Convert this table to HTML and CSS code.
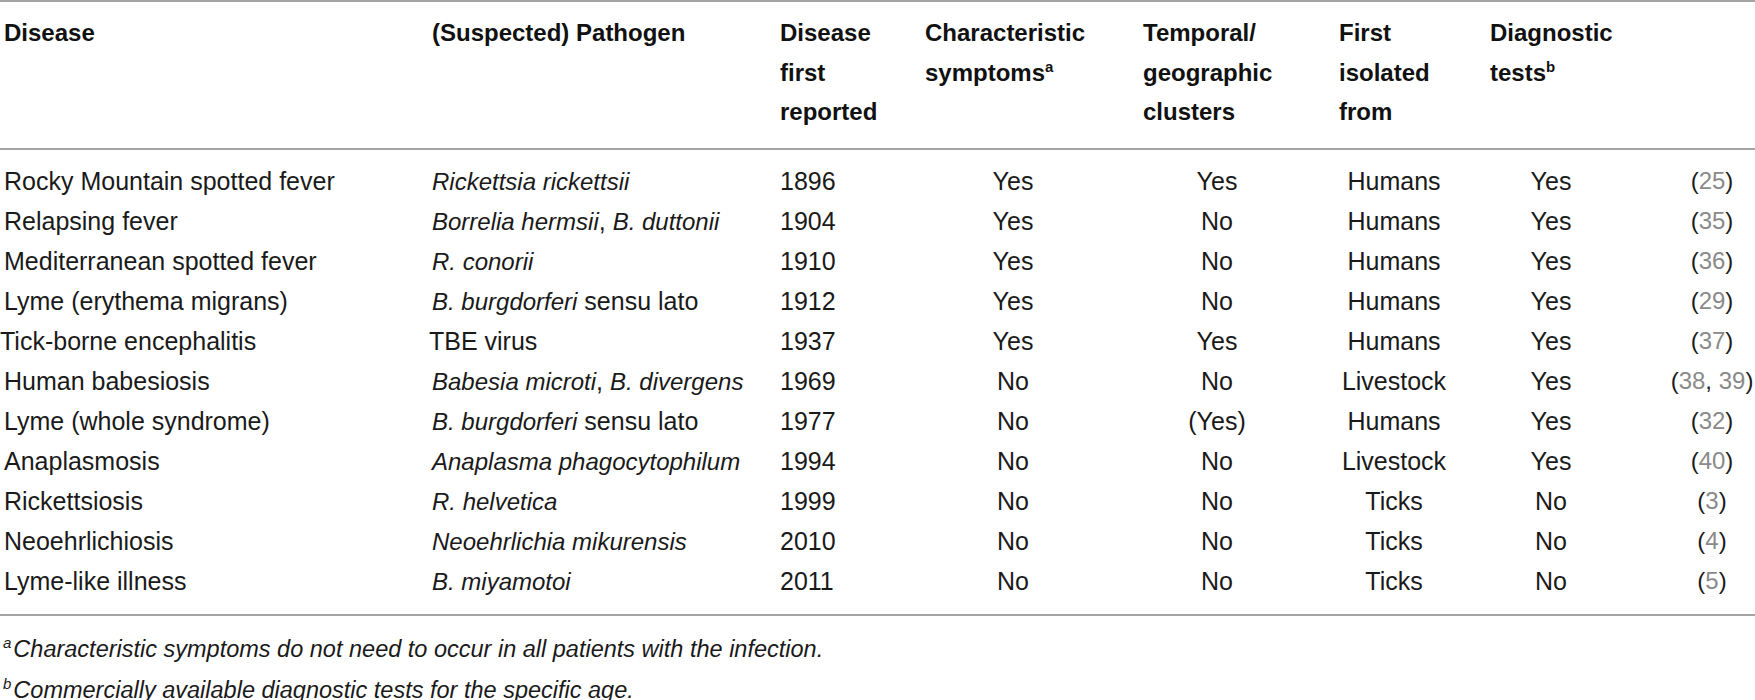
FILE: index.html
```html
<!DOCTYPE html>
<html lang="en">
<head>
  <meta charset="UTF-8">
  <meta name="viewport" content="width=device-width, initial-scale=1.0">
  <title>Tick-borne diseases</title>
  <link rel="stylesheet" href="styles.css">
</head>
<body>
  <div class="wrapper">
    <table class="diseases">
      <colgroup>
        <col class="c-disease">
        <col class="c-pathogen">
        <col class="c-year">
        <col class="c-symptoms">
        <col class="c-clusters">
        <col class="c-isolated">
        <col class="c-tests">
        <col class="c-ref">
      </colgroup>
      <thead>
        <tr>
          <th>Disease</th>
          <th>(Suspected) Pathogen</th>
          <th>Disease<br>first<br>reported</th>
          <th>Characteristic<br>symptoms<sup>a</sup></th>
          <th>Temporal/<br>geographic<br>clusters</th>
          <th>First<br>isolated<br>from</th>
          <th>Diagnostic<br>tests<sup>b</sup></th>
          <th></th>
        </tr>
      </thead>
      <tbody>
        <tr>
          <td>Rocky Mountain spotted fever</td>
          <td><i>Rickettsia rickettsii</i></td>
          <td>1896</td><td>Yes</td><td>Yes</td><td>Humans</td><td>Yes</td>
          <td>(<span class="ref">25</span>)</td>
        </tr>
        <tr>
          <td>Relapsing fever</td>
          <td><i>Borrelia hermsii</i>, <i>B. duttonii</i></td>
          <td>1904</td><td>Yes</td><td>No</td><td>Humans</td><td>Yes</td>
          <td>(<span class="ref">35</span>)</td>
        </tr>
        <tr>
          <td>Mediterranean spotted fever</td>
          <td><i>R. conorii</i></td>
          <td>1910</td><td>Yes</td><td>No</td><td>Humans</td><td>Yes</td>
          <td>(<span class="ref">36</span>)</td>
        </tr>
        <tr>
          <td>Lyme (erythema migrans)</td>
          <td><i>B. burgdorferi</i> sensu lato</td>
          <td>1912</td><td>Yes</td><td>No</td><td>Humans</td><td>Yes</td>
          <td>(<span class="ref">29</span>)</td>
        </tr>
        <tr class="flush">
          <td>Tick-borne encephalitis</td>
          <td>TBE virus</td>
          <td>1937</td><td>Yes</td><td>Yes</td><td>Humans</td><td>Yes</td>
          <td>(<span class="ref">37</span>)</td>
        </tr>
        <tr>
          <td>Human babesiosis</td>
          <td><i>Babesia microti</i>, <i>B. divergens</i></td>
          <td>1969</td><td>No</td><td>No</td><td>Livestock</td><td>Yes</td>
          <td>(<span class="ref">38</span>, <span class="ref">39</span>)</td>
        </tr>
        <tr>
          <td>Lyme (whole syndrome)</td>
          <td><i>B. burgdorferi</i> sensu lato</td>
          <td>1977</td><td>No</td><td>(Yes)</td><td>Humans</td><td>Yes</td>
          <td>(<span class="ref">32</span>)</td>
        </tr>
        <tr>
          <td>Anaplasmosis</td>
          <td><i>Anaplasma phagocytophilum</i></td>
          <td>1994</td><td>No</td><td>No</td><td>Livestock</td><td>Yes</td>
          <td>(<span class="ref">40</span>)</td>
        </tr>
        <tr>
          <td>Rickettsiosis</td>
          <td><i>R. helvetica</i></td>
          <td>1999</td><td>No</td><td>No</td><td>Ticks</td><td>No</td>
          <td>(<span class="ref">3</span>)</td>
        </tr>
        <tr>
          <td>Neoehrlichiosis</td>
          <td><i>Neoehrlichia mikurensis</i></td>
          <td>2010</td><td>No</td><td>No</td><td>Ticks</td><td>No</td>
          <td>(<span class="ref">4</span>)</td>
        </tr>
        <tr>
          <td>Lyme-like illness</td>
          <td><i>B. miyamotoi</i></td>
          <td>2011</td><td>No</td><td>No</td><td>Ticks</td><td>No</td>
          <td>(<span class="ref">5</span>)</td>
        </tr>
      </tbody>
    </table>
    <div class="notes">
      <p><sup>a</sup>Characteristic symptoms do not need to occur in all patients with the infection.</p>
      <p><sup>b</sup>Commercially available diagnostic tests for the specific age.</p>
    </div>
  </div>
</body>
</html>
```

FILE: styles.css
```css
body {
  margin: 0;
  background: white;
  font-family: "Liberation Sans", Arial, sans-serif;
  color: #1a1a1a;
}
.wrapper {
  width: 1755px;
}
.diseases {
  width: 1755px;
  border-collapse: collapse;
  table-layout: fixed;
  border-top: 2px solid #a3a3a3;
  border-bottom: 2px solid #a3a3a3;
}
.c-disease { width: 432px; }
.c-pathogen { width: 348px; }
.c-year { width: 145px; }
.c-symptoms { width: 218px; }
.c-clusters { width: 196px; }
.c-isolated { width: 151px; }
.c-tests { width: 179px; }
.c-ref { width: 86px; }

thead th {
  font-size: 24px;
  font-weight: bold;
  color: #111;
  text-align: left;
  vertical-align: top;
  line-height: 39.5px;
  padding: 11px 0 16px 0;
  border-bottom: 2px solid #a3a3a3;
}
thead th:first-child {
  padding-left: 4px;
}
sup {
  font-size: 15px;
  line-height: 0;
  vertical-align: 9px;
}
tbody td {
  font-size: 25px;
  line-height: 40px;
  height: 40px;
  padding: 0;
  text-align: center;
  white-space: nowrap;
}
tbody td i {
  font-size: 24px;
  line-height: 0;
}
tbody td:nth-child(1),
tbody td:nth-child(2) {
  text-align: left;
}
tbody td:nth-child(1) { padding-left: 4px; }
tbody td:nth-child(3) { padding-right: 103px; }
tbody td:nth-child(4) { padding-right: 42px; }
tbody td:nth-child(5) { padding-right: 48px; }
tbody td:nth-child(6) { padding-right: 41px; }
tbody td:nth-child(7) { padding-right: 57px; }
tbody td:nth-child(8) { font-size: 24px; }
tbody tr:first-child td {
  padding-top: 11px;
}
tbody tr:last-child td {
  padding-bottom: 13px;
}
.flush td:nth-child(1) { padding-left: 0; }
.flush td:nth-child(2) { position: relative; left: -3px; }
.ref {
  color: #8a8a8a;
}
.notes {
  padding-top: 13px;
}
.notes p {
  margin: 0;
  font-size: 23.5px;
  font-style: italic;
  line-height: 41px;
  padding-left: 3px;
}
.notes sup {
  font-size: 15px;
  margin-right: 2px;
}
```
